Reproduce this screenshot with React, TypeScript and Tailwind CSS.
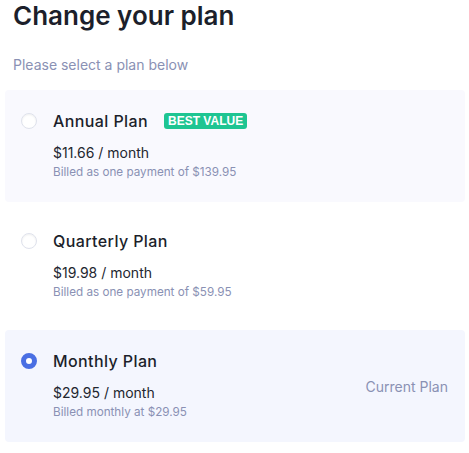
import React from "react";

type Plan = {
  name: string;
  price: string;
  billed: string;
  badge?: boolean;
  current?: boolean;
  bg: string;
};

const plans: Plan[] = [
  { name: "Annual Plan", price: "$11.66 / month", billed: "Billed as one payment of $139.95", badge: true, bg: "bg-[#f9f9fe]" },
  { name: "Quarterly Plan", price: "$19.98 / month", billed: "Billed as one payment of $59.95", bg: "bg-white" },
  { name: "Monthly Plan", price: "$29.95 / month", billed: "Billed monthly at $29.95", current: true, bg: "bg-[#f4f6fe]" },
];

export default function App() {
  return (
    <div className="w-[469px] h-[453px] bg-white px-[5px] font-['Inter',sans-serif]">
      <h1 className="ml-[8px] text-[26px] leading-[34px] font-semibold text-[#1c1f2b] -mt-[1px]">Change your plan</h1>
      <p className="ml-[8px] mt-[22px] text-[14px] leading-[20px] text-[#8a91b4]">Please select a plan below</p>
      <div className="mt-[15px] flex flex-col gap-[8px] w-[460px]">
        {plans.map((p) => (
          <div key={p.name} className={`${p.bg} rounded-[4px] h-[112px] pl-[16px] pr-[17px] py-[19px] flex items-start`}>
            <div className="h-[24px] flex items-center">
              {p.current ? (
                <div className="w-[16px] h-[16px] rounded-full border-[5px] border-[#4a6fe3] bg-white" />
              ) : (
                <div className="w-[16px] h-[16px] rounded-full border border-[#dfe2ec] bg-white shadow-[inset_0_1px_2px_rgba(0,0,0,0.06)]" />
              )}
            </div>
            <div className="ml-[16px] flex-1">
              <div className="h-[24px] flex items-center">
                <span className="text-[16px] font-medium tracking-[0.4px] text-[#1c1f2b]">{p.name}</span>
                {p.badge && (
                  <span className="ml-[16px] h-[16px] px-[4px] rounded-[3px] bg-[#1ec592] text-white text-[12px] leading-[16px] font-bold font-['Liberation_Sans',sans-serif]">
                    BEST VALUE
                  </span>
                )}
              </div>
              <div className="mt-[10px] text-[14px] leading-[20px] text-[#23262f]">{p.price}</div>
              <div className="mt-[1px] text-[11.7px] leading-[16px] text-[#8a91b4]">{p.billed}</div>
            </div>
            {p.current && (
              <div className="self-center text-[14px] text-[#8a91b4]">Current Plan</div>
            )}
          </div>
        ))}
      </div>
    </div>
  );
}
